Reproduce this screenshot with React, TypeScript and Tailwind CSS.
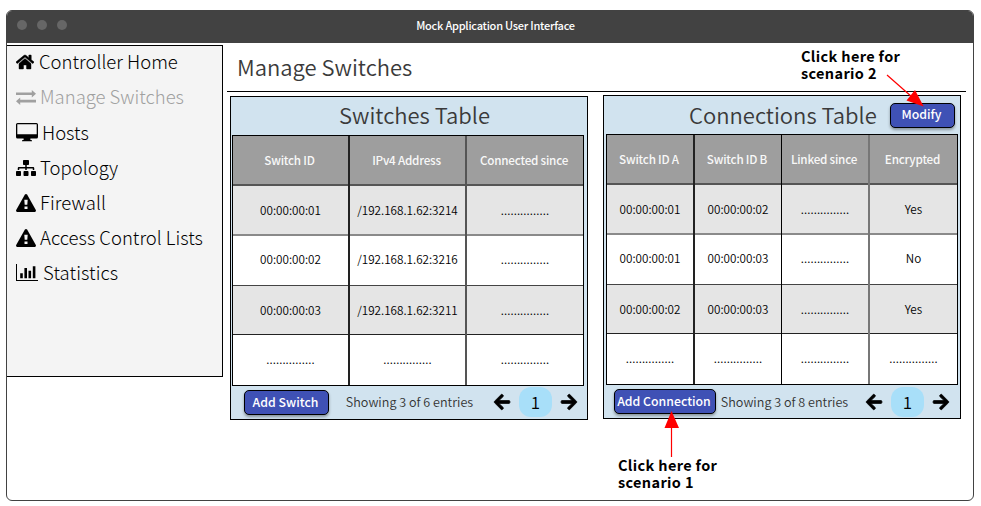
import React from "react";
import { FaHome, FaSitemap, FaArrowLeft, FaArrowRight } from "react-icons/fa";

const ff = "font-['Noto_Sans_CJK_SC','Noto_Sans',sans-serif]";
const dots = "...............";

function SwapIcon() {
  return (
    <svg width="20" height="15" viewBox="0 0 20 15" fill="currentColor">
      <path d="M0 2.500h15.800V0L20 3.800 15.800 7.400V5.100H0zM20 9.700H4.200V7.400L0 11.200 4.200 15V12.400H20z" />
    </svg>
  );
}
function MonitorIcon() {
  return (
    <svg width="22" height="19" viewBox="0 0 22 19">
      <path fill="currentColor" fillRule="evenodd" d="M1.600 0h18.800A1.600 1.600 0 0 1 22 1.600v12.300a1.600 1.600 0 0 1-1.600 1.600h-6v1.600h.8q.8 0 .8.8v.4H6v-.4q0-.8.8-.8h.8v-1.600h-6A1.600 1.600 0 0 1 0 13.900V1.600A1.600 1.600 0 0 1 1.600 0zM1.300 1.200v10.100h19.400V1.200z" />
    </svg>
  );
}
function WarnIcon() {
  return (
    <svg width="20" height="18" viewBox="0 0 20 18">
      <path fill="currentColor" d="M8.900.6q1.100-1.100 2.200 0l8.700 15.400q.6 1.700-1 2H1.200q-1.600-.3-1-2z" />
      <path fill="#f4f4f4" d="M8.300 5.800h3.400l-.4 5H8.700zM8.500 12.400h3v2.600h-3z" />
    </svg>
  );
}
function StatsIcon() {
  return (
    <svg width="22" height="18" viewBox="0 0 22 18" fill="currentColor">
      <path d="M0 0h1v16H22V17H0zM4.200 9.300h2.600v5H4.200zM8.400 4h2.600v10.300H8.400zM12.500 6.700h2.600v7.600h-2.600zM16.800 2.300h2.600v12h-2.600z" />
    </svg>
  );
}

const nav: { label: string; icon: React.ReactNode; cls: string }[] = [
  { label: "Controller Home", icon: <FaHome size={18} stroke="currentColor" strokeWidth={14} />, cls: "gap-[5px]" },
  { label: "Manage Switches", icon: <SwapIcon />, cls: "gap-1 text-[#a0a0a0]" },
  { label: "Hosts", icon: <MonitorIcon />, cls: "gap-1" },
  { label: "Topology", icon: <FaSitemap size={20} />, cls: "gap-1" },
  { label: "Firewall", icon: <WarnIcon />, cls: "gap-1 tracking-[0.1px]" },
  { label: "Access Control Lists", icon: <WarnIcon />, cls: "gap-1" },
  { label: "Statistics", icon: <StatsIcon />, cls: "gap-[5px] tracking-[0.1px]" },
];

const btn =
  "flex items-center justify-center whitespace-nowrap rounded-[5px] border border-black bg-[#3f51b5] pr-[2px] font-medium text-white shadow-[0_2px_3px_rgba(0,0,0,0.35)] text-[12.300px]";

const heading = "whitespace-nowrap text-[22px] font-[350] text-[#3a3a3a]";

const hlines = [
  "border-b-2 border-b-[#555] pr-[2px]",
  "border-b-2 border-b-[#8a8a8a] pb-px",
  "border-b border-b-[#444] pb-[3px]",
  "border-b border-b-[#222] pb-px",
  "pb-[2px]",
];

function Grid({ head, rows, cols, vlines }: { head: string[]; rows: string[][]; cols: string; vlines: string[] }) {
  return (
    <div className={`grid h-[251px] w-[352px] grid-rows-[50px_50px_50px_49px_50px] border border-black bg-white ${cols}`}>
      {[head, ...rows].map((r, i) =>
        r.map((c, j) => (
          <div key={`${i}-${j}`} className={`flex ${vlines[j]}`}>
            <div
              className={`flex flex-1 items-center justify-center whitespace-nowrap ${
                i === 0 ? "bg-[#9e9e9e] text-[11.700px] font-medium tracking-[-0.22px] text-[#f8f8f8]" : "text-[11.700px] font-[350] text-black"
              } ${i === 1 || i === 3 ? "bg-[#e5e5e5]" : ""} ${hlines[i]} ${c === dots ? "tracking-[0.100px]" : ""}`}
            >
              {c}
            </div>
          </div>
        ))
      )}
    </div>
  );
}

function Footer({ action, text, cls, textCls, arrowCls }: { action: string; text: string; cls: string; textCls: string; arrowCls: string }) {
  return (
    <div className="flex h-[32px] items-center">
      <button className={`${btn} h-[25px] shrink-0 ${cls}`}>{action}</button>
      <span className={`w-[137px] text-center text-[12.600px] font-[350] text-[#333] ${textCls}`}>{text}</span>
      <div className={`flex items-center ${arrowCls}`}>
        <FaArrowLeft size={18} stroke="currentColor" strokeWidth={22} className="shrink-0" />
        <span className="ml-2 flex h-[30px] w-[33px] items-center justify-center rounded-[12px] bg-[#a8dff9] pb-px text-[17px] font-[350]">1</span>
        <FaArrowRight size={18} stroke="currentColor" strokeWidth={22} className="ml-2 shrink-0" />
      </div>
    </div>
  );
}

export default function App() {
  return (
    <div className={`relative h-[506px] w-[981px] overflow-hidden bg-white pl-[6px] pt-[10px] ${ff}`}>
      <div className="flex h-[491px] w-[968px] flex-col overflow-hidden rounded-[6px] border border-[#424242]">
        <header className="flex h-[32px] shrink-0 items-center bg-[#424242] pb-[3px]">
          <div className="flex w-[200px] gap-[10px] pb-px pl-[10px]">
            <i className="h-[10px] w-[10px] rounded-full bg-[#666]" />
            <i className="h-[10px] w-[10px] rounded-full bg-[#666]" />
            <i className="h-[10px] w-[10px] rounded-full bg-[#666]" />
          </div>
          <div className="w-[577px] text-center text-[11px] font-medium tracking-[-0.240px] text-white">Mock Application User Interface</div>
        </header>
        <div className="flex flex-1">
          <nav className="-ml-px mt-[2px] h-[332px] w-[217px] shrink-0 border border-black bg-[#f4f4f4] pl-[9px]">
            <div className="-mt-[1.600px]">
              {nav.map((n) => (
                <div key={n.label} className={`flex h-[35.200px] items-center whitespace-nowrap text-[18.500px] font-light ${n.cls}`}>
                  {n.icon}
                  <span>{n.label}</span>
                </div>
              ))}
            </div>
          </nav>
          <main className="ml-[4px]">
            <div className={`flex h-[49px] w-[739px] items-center border-b border-black pb-[2px] pl-[10px] ${heading}`}>Manage Switches</div>
            <div className="flex pl-[3px] pt-[3px]">
              <section className="mt-px h-[324px] w-[358px] border border-black bg-[#d1e3ef] pl-px">
                <h2 className={`flex h-[38px] items-center justify-center pb-[3px] pl-[12px] pr-[2px] ${heading}`}>Switches Table</h2>
                <Grid
                  head={["Switch ID", "IPv4 Address", "Connected since"]}
                  rows={[
                    ["00:00:00:01", "/192.168.1.62:3214", dots],
                    ["00:00:00:02", "/192.168.1.62:3216", dots],
                    ["00:00:00:03", "/192.168.1.62:3211", dots],
                    [dots, dots, dots],
                  ]}
                  cols="grid-cols-[117px_117px_116px]"
                  vlines={["border-r-2 border-r-[#222]", "border-r-2 border-r-[#555]", ""]}
                />
                <div className="pl-[12px]">
                  <Footer action="Add Switch" text="Showing 3 of 6 entries" cls="w-[85px] mr-[12px]" textCls="" arrowCls="ml-[15px]" />
                </div>
              </section>
              <section className="ml-[15px] h-[324px] w-[358px] border border-black bg-[#d1e3ef] pl-[2px]">
                <div className="flex h-[38px] items-center">
                  <h2 className={`w-[284px] pb-[2px] pl-[83px] ${heading}`}>Connections Table</h2>
                  <button className={`${btn} h-[25px] w-[65px] pb-[2px]`}>Modify</button>
                </div>
                <Grid
                  head={["Switch ID A", "Switch ID B", "Linked since", "Encrypted"]}
                  rows={[
                    ["00:00:00:01", "00:00:00:02", dots, "Yes"],
                    ["00:00:00:01", "00:00:00:03", dots, "No"],
                    ["00:00:00:02", "00:00:00:03", dots, "Yes"],
                    [dots, dots, dots, dots],
                  ]}
                  cols="grid-cols-[88px_87px_88px_87px]"
                  vlines={["border-r-2 border-r-[#222]", "border-r border-r-black", "border-r-2 border-r-[#777]", ""]}
                />
                <div className="pl-[8px]">
                  <Footer action="Add Connection" text="Showing 3 of 8 entries" cls="w-[102px]" textCls="pt-[3px]" arrowCls="ml-[12px] pt-[2px]" />
                </div>
              </section>
            </div>
          </main>
        </div>
      </div>
      <div className="absolute left-[801px] top-[47px] text-[14.500px] font-bold leading-[17px] tracking-[0.350px]">Click here for<br />scenario 2</div>
      <div className="absolute left-[618px] top-[456px] text-[14.500px] font-bold leading-[17px] tracking-[0.350px]">Click here for<br />scenario 1</div>
      <svg className="absolute left-0 top-0" width="981" height="506">
        <path d="M887 75L912 97M671.500 457V425" stroke="#f00" strokeWidth="1.200" />
        <path d="M923.700 106.500L915 90L906.500 100.500zM671.500 411L664.500 428h14.500z" fill="#f00" />
      </svg>
    </div>
  );
}
